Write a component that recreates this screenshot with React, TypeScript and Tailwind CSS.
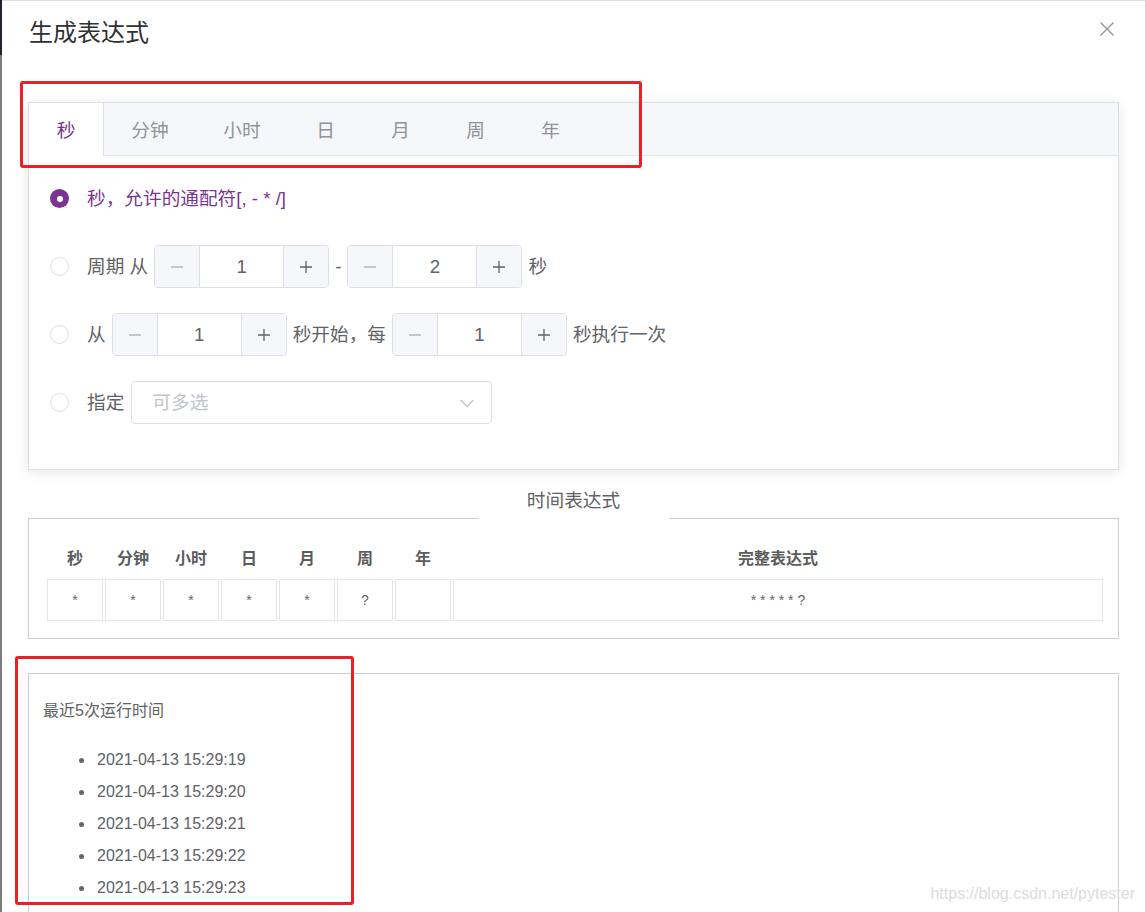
import React from "react";

const FONT = "font-[family-name:Liberation_Sans,Noto_Sans_CJK_SC,sans-serif]";

function Radio({ checked }: { checked?: boolean }) {
  if (checked) {
    return (
      <span className="flex h-[19px] w-[19px] shrink-0 items-center justify-center rounded-full bg-[#7b3590]">
        <span className="h-[6px] w-[6px] rounded-full bg-white" />
      </span>
    );
  }
  return <span className="h-[19px] w-[19px] shrink-0 rounded-full border border-[#dcdfe6] bg-white" />;
}

function NumberInput({ value }: { value: string }) {
  return (
    <div className="mx-[6px] flex h-[43px] w-[175px] shrink-0 overflow-hidden rounded-[4px] border border-[#dcdfe6] bg-white">
      <div className="flex w-[45px] items-center justify-center border-r border-[#dcdfe6] bg-[#f5f7fa] text-[#b4b7be]">
        <svg width="16" height="16" viewBox="0 0 16 16">
          <path d="M2 8h12" stroke="currentColor" strokeWidth="1.3" />
        </svg>
      </div>
      <div className="flex flex-1 items-center justify-center text-[18.67px] text-[#606266]">{value}</div>
      <div className="flex w-[45px] items-center justify-center border-l border-[#dcdfe6] bg-[#f5f7fa] text-[#606266]">
        <svg width="16" height="16" viewBox="0 0 16 16">
          <path d="M2 8h12M8 2v12" stroke="currentColor" strokeWidth="1.3" />
        </svg>
      </div>
    </div>
  );
}

const tabs = ["秒", "分钟", "小时", "日", "月", "周", "年"];
const cols = ["秒", "分钟", "小时", "日", "月", "周", "年"];
const vals = ["*", "*", "*", "*", "*", "?", ""];
const times = [
  "2021-04-13 15:29:19",
  "2021-04-13 15:29:20",
  "2021-04-13 15:29:21",
  "2021-04-13 15:29:22",
  "2021-04-13 15:29:23",
];

export default function App() {
  return (
    <div className={`${FONT} relative flex h-[912px] w-[1145px] overflow-hidden bg-white`}>
      {/* left edge strip */}
      <div className="flex w-[2px] shrink-0 flex-col">
        <div className="h-[55px] bg-[#22222c]" />
        <div className="flex-1 bg-[#7c7c7c]" />
      </div>

      <div className="flex min-w-0 flex-1 flex-col border-t border-[#dedede] px-[26px]">
        {/* header */}
        <div className="flex items-start justify-between pt-[19px]">
          <div className="pl-[1px] text-[24px] leading-[26px] text-[#303133]">生成表达式</div>
          <div className="mr-[4px] mt-[1px] text-[#909399]">
            <svg width="16" height="16" viewBox="0 0 16 16">
              <path d="M1.5 1.5l13 13M14.5 1.5l-13 13" stroke="currentColor" strokeWidth="1.3" />
            </svg>
          </div>
        </div>

        {/* tabs card */}
        <div className="mt-[56px] flex flex-col border border-[#dcdfe6] bg-white shadow-[0_2px_12px_0_rgba(0,0,0,0.1)]">
          <div className="flex h-[53px] border-b border-[#e4e7ed] bg-[#f5f7fa]">
            {tabs.map((t, i) =>
              i === 0 ? (
                <div
                  key={t}
                  className="-mb-px flex h-[53px] w-[75px] items-center justify-center border-r border-[#dcdfe6] bg-white pt-[3px] text-[18.67px] text-[#7b3590]"
                >
                  {t}
                </div>
              ) : (
                <div
                  key={t}
                  className={`flex h-[52px] items-center justify-center pt-[3px] text-[18.67px] text-[#909399] ${
                    t.length === 2 ? "w-[92px]" : "w-[75px]"
                  }`}
                >
                  {t}
                </div>
              )
            )}
          </div>

          <div className="flex flex-col gap-[25px] pb-[45px] pl-[21px] pt-[21px] text-[18.67px] text-[#606266]">
            <div className="flex h-[43px] items-center">
              <Radio checked />
              <span className="ml-[18px] text-[#7b3590]">秒，允许的通配符[, - * /]</span>
            </div>
            <div className="flex h-[43px] items-center">
              <Radio />
              <span className="ml-[18px]">周期 从</span>
              <NumberInput value="1" />
              <span>-</span>
              <NumberInput value="2" />
              <span>秒</span>
            </div>
            <div className="flex h-[43px] items-center">
              <Radio />
              <span className="ml-[18px]">从</span>
              <NumberInput value="1" />
              <span>秒开始，每</span>
              <NumberInput value="1" />
              <span>秒执行一次</span>
            </div>
            <div className="flex h-[43px] items-center">
              <Radio />
              <span className="ml-[18px]">指定</span>
              <div className="ml-[7px] flex h-[43px] w-[361px] items-center justify-between rounded-[4px] border border-[#dcdfe6] bg-white pl-[20px] pr-[15px]">
                <span className="text-[#c0c4cc]">可多选</span>
                <svg width="18" height="18" viewBox="0 0 18 18" className="text-[#c0c4cc]">
                  <path d="M2.5 6l6.5 6.5L15.5 6" stroke="currentColor" strokeWidth="1.3" fill="none" />
                </svg>
              </div>
            </div>
          </div>
        </div>

        {/* time expression */}
        <div className="mt-[13px] flex flex-col">
          <div className="flex h-[36px] items-stretch">
            <div className="flex-1 border-b border-[#cccccc]" />
            <div className="flex w-[190px] items-center justify-center text-[18.67px] text-[#606266]">时间表达式</div>
            <div className="flex-1 border-b border-[#cccccc]" />
          </div>
          <div className="border-x border-b border-[#cccccc] pb-[17px] pl-[18px] pr-[15px] pt-[22px]">
            <div className="grid grid-cols-[repeat(7,56px)_1fr] gap-[2px]">
              {cols.map((c) => (
                <div key={c} className="flex h-[36px] items-center justify-center text-[16px] font-bold text-[#5c5c5c]">
                  {c}
                </div>
              ))}
              <div className="flex h-[36px] items-center justify-center text-[16px] font-bold text-[#5c5c5c]">完整表达式</div>
              {vals.map((v, i) => (
                <div key={i} className="flex h-[42px] items-center justify-center border border-[#e6e6e6] text-[14px] text-[#666666]">
                  {v}
                </div>
              ))}
              <div className="flex h-[42px] items-center justify-center border border-[#e6e6e6] text-[14px] text-[#666666]">
                * * * * * ?
              </div>
            </div>
          </div>
        </div>

        {/* recent runs */}
        <div className="mt-[34px] flex-1 border-x border-t border-[#cccccc] pl-[14px] pt-[25px]">
          <div className="text-[16px] leading-[24px] text-[#606266]">最近5次运行时间</div>
          <ul className="mt-[21px] flex flex-col">
            {times.map((t) => (
              <li key={t} className="flex h-[32px] items-center text-[16px] text-[#606266]">
                <span className="ml-[36px] h-[5px] w-[5px] rounded-full bg-[#666666]" />
                <span className="ml-[13px]">{t}</span>
              </li>
            ))}
          </ul>
        </div>
      </div>

      {/* annotation overlays */}
      <div className="pointer-events-none absolute left-[20px] top-[81px] h-[87px] w-[622px] rounded-[3px] border-[3px] border-[#ea1f27]" />
      <div className="pointer-events-none absolute left-[15px] top-[656px] h-[249px] w-[339px] rounded-[3px] border-[3px] border-[#ea1f27]" />
      <div className="pointer-events-none absolute right-[10px] top-[882px] text-[16px] text-[#dcdcdc]">
        https://blog.csdn.net/pytester
      </div>
    </div>
  );
}
